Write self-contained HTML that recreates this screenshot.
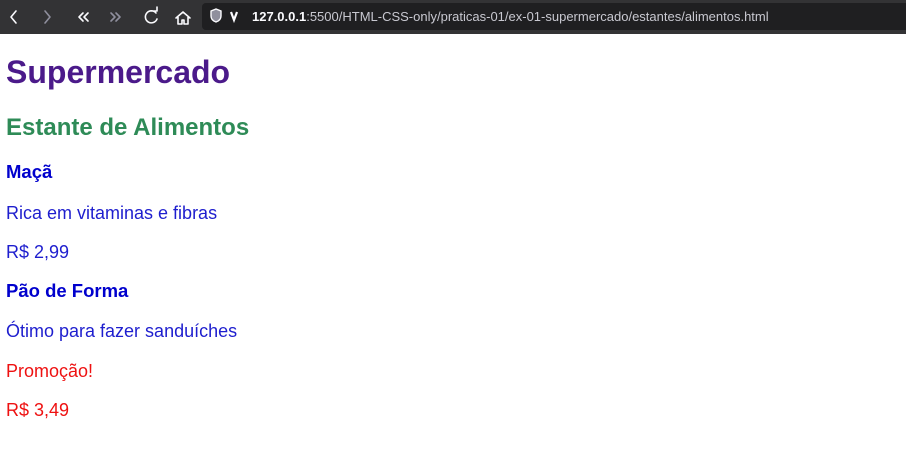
<!DOCTYPE html>
<html><head><meta charset="utf-8"><style>
body{margin:0;width:906px;height:469px;background:#fff;font-family:"Liberation Sans",Arial,sans-serif;position:relative;overflow:hidden}
.bar{position:absolute;left:0;top:0;width:906px;height:34px;background:#333335}
.url{position:absolute;left:202px;top:3px;width:704px;height:27px;background:#1f1f21;border-radius:4px 0 0 4px}
.t{position:absolute;left:6px;white-space:nowrap}
</style></head><body>
<div class="bar">
<svg width="200" height="34" style="position:absolute;left:0;top:0" fill="none" stroke="#fbfbfe" stroke-width="1.6" stroke-linecap="round" stroke-linejoin="round">
<path d="M16 11l-5 6 5 6"/>
<path d="M45 11l5 6-5 6" stroke="#8f8f9d"/>
<path d="M83 13l-4 4 4 4M88 13l-4 4 4 4"/>
<path d="M111 13l4 4-4 4M116 13l4 4-4 4" stroke="#8f8f9d"/>
<path d="M156 13a6 6 0 1 0 1 6M151 11h6v-4"/>
<path d="M176 18l7-6 7 6M178 17v7h4v-4h2v4h4v-7"/>
</svg>
<div class="url"></div>
<svg width="40" height="34" style="position:absolute;left:206px;top:0" fill="none" stroke="#fbfbfe" stroke-width="1.4">
<path d="M5 11l5-2 5 2v5c0 3-2 5-5 6-3-1-5-3-5-6z" fill="#8f8f9d"/>
<path d="M25 12l3 8 3-8" stroke-width="2.2"/>
</svg>
<div style="position:absolute;left:252px;top:0;line-height:34px;font-size:13px;color:#c8c8d0"><b style="color:#fbfbfe">127.0.0.1</b>:5500/HTML-CSS-only/praticas-01/ex-01-supermercado/estantes/alimentos.html</div>
</div>
<div class="t" style="top:52px;font-size:32px;line-height:40px;font-weight:bold;color:#4b1a8a">Supermercado</div>
<div class="t" style="top:113px;font-size:24px;line-height:30px;font-weight:bold;color:#2e8b57">Estante de Alimentos</div>
<div class="t" style="top:160px;font-size:18.5px;line-height:24px;font-weight:bold;color:#0000cd">Maçã</div>
<div class="t" style="top:201px;font-size:18px;line-height:24px;color:#1e1ece">Rica em vitaminas e fibras</div>
<div class="t" style="top:240px;font-size:18px;line-height:24px;color:#1e1ece">R$ 2,99</div>
<div class="t" style="top:279px;font-size:18.5px;line-height:24px;font-weight:bold;color:#0000cd">Pão de Forma</div>
<div class="t" style="top:319px;font-size:18px;line-height:24px;color:#1e1ece">Ótimo para fazer sanduíches</div>
<div class="t" style="top:359px;font-size:18px;line-height:24px;color:#ee1111">Promoção!</div>
<div class="t" style="top:398px;font-size:18px;line-height:24px;color:#ee1111">R$ 3,49</div>
</body></html>
